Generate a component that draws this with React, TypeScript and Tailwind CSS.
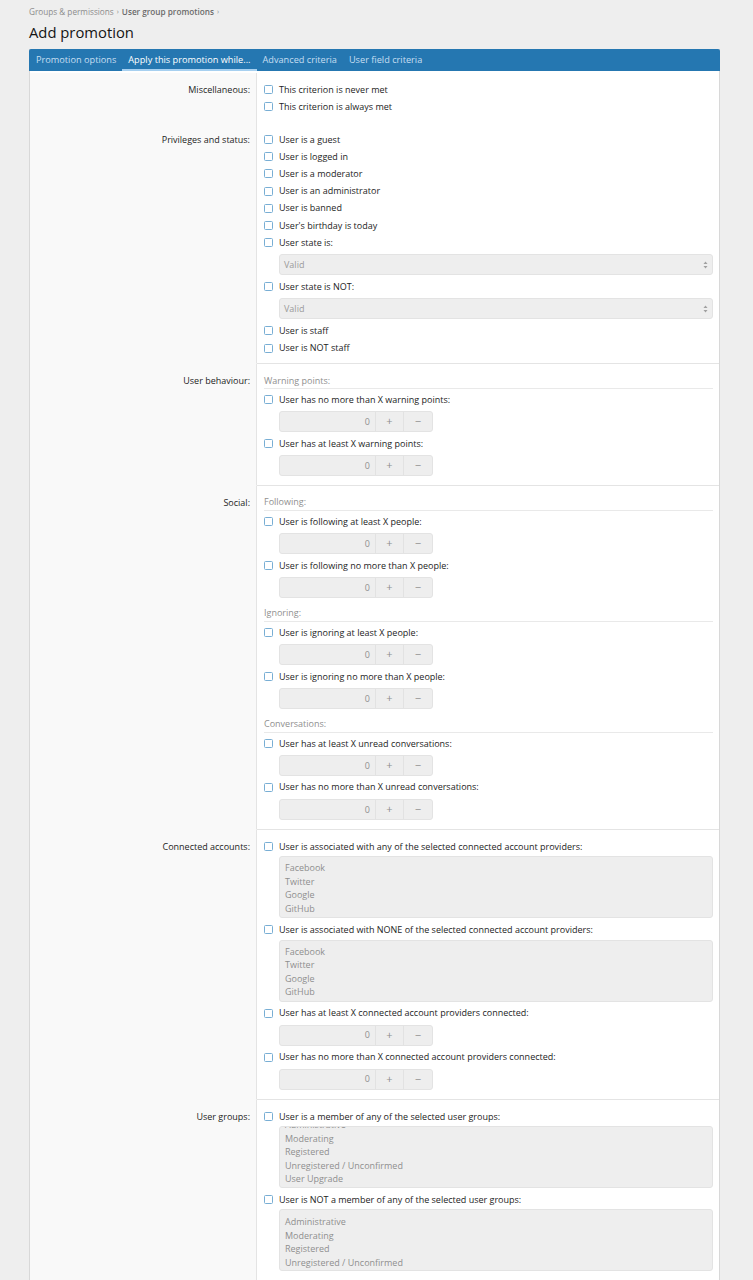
import React from "react";

function Cb({ label }: { label: string }) {
  return (
    <div className="flex h-[17.2px] items-center">
      <span className="box-border h-[9px] w-[9px] shrink-0 rounded-[1.5px] border border-[#78aed4] bg-white" />
      <span className="ml-[6px] whitespace-nowrap text-[#1d1d1d]">{label}</span>
    </div>
  );
}

function Heading({ text, first }: { text: string; first?: boolean }) {
  return (
    <div
      className={`mb-[1.5px] flex h-[17px] items-center border-b border-[#e9e9e9] text-[#8f8f8f] ${
        first ? "" : "mt-[4.5px]"
      }`}
    >
      {text}
    </div>
  );
}

function Num() {
  return (
    <div className="pb-[2.8px] pl-[15px] pt-[3px]">
      <div className="box-border flex h-[21px] w-[154px] rounded-[3px] border border-[#e3e3e3] bg-[#eeeeee] text-[#8f8f8f]">
        <div className="flex flex-1 items-center justify-end pr-[5px]">0</div>
        <div className="flex w-[28px] items-center justify-center border-l border-[#e2e2e2] text-[11px]">
          +
        </div>
        <div className="flex w-[29px] items-center justify-center border-l border-[#e2e2e2] text-[11px]">
          −
        </div>
      </div>
    </div>
  );
}

function Sel() {
  return (
    <div className="py-[3px] pl-[15px]">
      <div className="box-border flex h-[21px] items-center justify-between rounded-[3px] border border-[#e3e3e3] bg-[#eeeeee] pl-[4px] pr-[4px] text-[#9b9b9b]">
        <span>Valid</span>
        <svg width="5" height="8" viewBox="0 0 5 8">
          <path d="M2.5 0.5 L4.5 3 H0.5 Z" fill="#a0a0a0" />
          <path d="M2.5 7.5 L4.5 5 H0.5 Z" fill="#a0a0a0" />
        </svg>
      </div>
    </div>
  );
}

function List({ items, offset }: { items: string[]; offset: string }) {
  return (
    <div className="pb-[3px] pl-[15px] pt-[1px]">
      <div className="box-border h-[62px] overflow-hidden rounded-[3px] border border-[#e3e3e3] bg-[#eeeeee] pl-[5px] text-[#8f8f8f]">
        <div className={offset}>
          {items.map((it) => (
            <div key={it} className="h-[13.5px] whitespace-nowrap leading-[13.5px]">
              {it}
            </div>
          ))}
        </div>
      </div>
    </div>
  );
}

function Section({
  label,
  sep,
  pb = "pb-[6.5px]",
  children,
}: {
  label: string;
  sep?: boolean;
  pb?: string;
  children: React.ReactNode;
}) {
  return (
    <div className="grid grid-cols-[227px_1fr]">
      <div
        className={`border-r border-[#e4e4e4] bg-[#f9f9f9] pr-[6px] ${
          sep ? "border-t border-t-transparent" : ""
        } pt-[8px]`}
      >
        <div className="flex h-[17.2px] items-center justify-end whitespace-nowrap text-[#1d1d1d]">
          {label}
        </div>
      </div>
      <div
        className={`${pb} pl-[7px] pr-[6px] pt-[8px] ${
          sep ? "border-t border-[#e4e4e4]" : ""
        }`}
      >
        {children}
      </div>
    </div>
  );
}

const providers = ["Facebook", "Twitter", "Google", "GitHub", "Linkedin", "Microsoft", "Yahoo"];
const groups = [
  "Administrative",
  "Moderating",
  "Registered",
  "Unregistered / Unconfirmed",
  "User Upgrade",
];

export default function App() {
  return (
    <div className="min-h-screen bg-[#eeeeee] font-['Open_Sans',sans-serif] text-[9px] text-[#1d1d1d]">
      <div className="pl-[29px] pt-[6px]">
        <div className="flex h-[12px] items-center text-[8.2px] text-[#8c8c8c]">
          <span>Groups &amp; permissions</span>
          <span className="mx-[3px] text-[7px]">›</span>
          <span className="font-semibold text-[#6a6a6a]">User group promotions</span>
          <span className="mx-[3px] text-[7px]">›</span>
        </div>
        <div className="mt-[4px] flex h-[20px] items-center text-[14.8px] text-[#141414]">
          Add promotion
        </div>
      </div>
      <div className="ml-[29px] mr-[33px] mt-[7px] border border-[#d8d8d8] bg-white">
        <div className="-mx-px -mt-px flex h-[22px] items-stretch rounded-t-[2px] bg-[#2577b1] pl-[1px] text-[9.2px]">
          <div className="flex items-center px-[6px] text-[#c7dff1]">Promotion options</div>
          <div className="flex items-center border-b-2 border-[#a7d0f0] px-[6px] pt-[2px] text-white">
            Apply this promotion while...
          </div>
          <div className="flex items-center px-[6px] text-[#c7dff1]">Advanced criteria</div>
          <div className="flex items-center px-[6px] text-[#c7dff1]">User field criteria</div>
        </div>

        <div className="pt-[2px]">
          <Section label="Miscellaneous:" pb="pb-[7.5px]">
            <Cb label="This criterion is never met" />
            <Cb label="This criterion is always met" />
          </Section>
          <Section label="Privileges and status:">
            <Cb label="User is a guest" />
            <Cb label="User is logged in" />
            <Cb label="User is a moderator" />
            <Cb label="User is an administrator" />
            <Cb label="User is banned" />
            <Cb label="User's birthday is today" />
            <Cb label="User state is:" />
            <Sel />
            <Cb label="User state is NOT:" />
            <Sel />
            <Cb label="User is staff" />
            <Cb label="User is NOT staff" />
          </Section>
          <Section label="User behaviour:" sep>
            <Heading text="Warning points:" first />
            <Cb label="User has no more than X warning points:" />
            <Num />
            <Cb label="User has at least X warning points:" />
            <Num />
          </Section>
          <Section label="Social:" sep>
            <Heading text="Following:" first />
            <Cb label="User is following at least X people:" />
            <Num />
            <Cb label="User is following no more than X people:" />
            <Num />
            <Heading text="Ignoring:" />
            <Cb label="User is ignoring at least X people:" />
            <Num />
            <Cb label="User is ignoring no more than X people:" />
            <Num />
            <Heading text="Conversations:" />
            <Cb label="User has at least X unread conversations:" />
            <Num />
            <Cb label="User has no more than X unread conversations:" />
            <Num />
          </Section>
          <Section label="Connected accounts:" sep>
            <Cb label="User is associated with any of the selected connected account providers:" />
            <List items={providers} offset="pt-[4px]" />
            <Cb label="User is associated with NONE of the selected connected account providers:" />
            <List items={providers} offset="pt-[4px]" />
            <Cb label="User has at least X connected account providers connected:" />
            <Num />
            <Cb label="User has no more than X connected account providers connected:" />
            <Num />
          </Section>
          <Section label="User groups:" sep>
            <Cb label="User is a member of any of the selected user groups:" />
            <List items={groups} offset="-mt-[9px]" />
            <Cb label="User is NOT a member of any of the selected user groups:" />
            <List items={groups} offset="pt-[5px]" />
          </Section>
          <Section label="Content and achievements:" sep>
            <Cb label="User has posted at least X messages:" />
            <Num />
          </Section>
        </div>
      </div>
    </div>
  );
}
